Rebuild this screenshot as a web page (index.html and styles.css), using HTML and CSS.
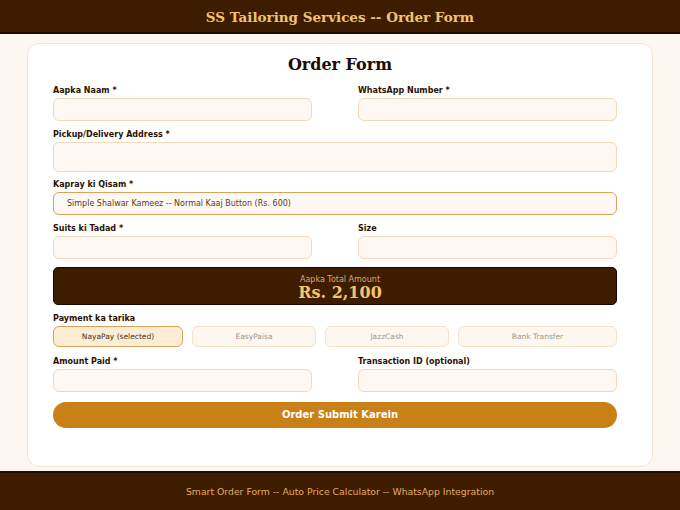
FILE: index.html
```html
<!DOCTYPE html>
<html>
<head>
<meta charset="utf-8">
<link rel="stylesheet" href="styles.css">
</head>
<body>
<header class="top">SS Tailoring Services -- Order Form</header>
<main class="page">
  <section class="card">
    <h2 class="card-title">Order Form</h2>
    <form class="form">
      <div class="row">
        <div class="field">
          <label class="lbl">Aapka Naam *</label>
          <input class="inp" type="text">
        </div>
        <div class="field">
          <label class="lbl">WhatsApp Number *</label>
          <input class="inp" type="text">
        </div>
      </div>
      <div class="field">
        <label class="lbl">Pickup/Delivery Address *</label>
        <div class="inp tall"></div>
      </div>
      <div class="field">
        <label class="lbl">Kapray ki Qisam *</label>
        <div class="inp sel">Simple Shalwar Kameez -- Normal Kaaj Button (Rs. 600)</div>
      </div>
      <div class="row">
        <div class="field">
          <label class="lbl">Suits ki Tadad *</label>
          <input class="inp" type="text">
        </div>
        <div class="field">
          <label class="lbl">Size</label>
          <input class="inp" type="text">
        </div>
      </div>
      <div class="total">
        <div class="total-lbl">Aapka Total Amount</div>
        <div class="total-val">Rs. 2,100</div>
      </div>
      <div class="field pay-field">
        <label class="lbl">Payment ka tarika</label>
        <div class="pay">
          <div class="pbtn on">NayaPay (selected)</div>
          <div class="pbtn">EasyPaisa</div>
          <div class="pbtn">JazzCash</div>
          <div class="pbtn">Bank Transfer</div>
        </div>
      </div>
      <div class="row">
        <div class="field">
          <label class="lbl">Amount Paid *</label>
          <input class="inp" type="text">
        </div>
        <div class="field">
          <label class="lbl">Transaction ID (optional)</label>
          <input class="inp" type="text">
        </div>
      </div>
      <div class="submit">Order Submit Karein</div>
    </form>
  </section>
</main>
<footer class="foot">Smart Order Form -- Auto Price Calculator -- WhatsApp Integration</footer>
</body>
</html>
```
FILE: styles.css
```css
* { box-sizing: border-box; }
html, body { margin: 0; padding: 0; }
body {
  background: #fdf7f2;
  font-family: "DejaVu Sans", sans-serif;
  width: 680px;
  height: 510px;
  overflow: hidden;
}
.top {
  height: 34px;
  background: #3d1c00;
  border-bottom: 2px solid #1e0d00;
  color: #f2c46d;
  font-family: "DejaVu Serif", serif;
  font-weight: bold;
  font-size: 13.5px;
  line-height: 34px;
  text-align: center;
}
.page {
  padding: 9px 27px 4px;
}
.card {
  height: 424px;
  background: #ffffff;
  border: 1px solid #f4e4d3;
  border-radius: 12px;
  padding: 11px 0 0;
}
.card-title {
  margin: 0 0 9px;
  font-family: "DejaVu Serif", serif;
  font-weight: bold;
  font-size: 16px;
  line-height: 20px;
  text-align: center;
  color: #1e0c00;
}
.form {
  padding: 0 35px 0 25px;
}
.row {
  display: grid;
  grid-template-columns: 259px 259px;
  column-gap: 46px;
}
.field {
  margin-bottom: 6.5px;
}
.lbl {
  display: block;
  font-weight: bold;
  font-size: 8px;
  line-height: 13px;
  color: #2b1200;
  margin-bottom: 1px;
}
.inp {
  display: block;
  width: 100%;
  height: 23px;
  margin: 0;
  background: #fdf8f3;
  border: 1px solid #f0dabd;
  border-radius: 6px;
  outline: none;
  font-family: "DejaVu Sans", sans-serif;
}
.tall { height: 30px; }
.sel {
  border-color: #d9a35a;
  font-size: 8px;
  line-height: 21px;
  color: #5a3c22;
  padding-left: 13px;
}
.total {
  margin-top: 2px;
  margin-bottom: 6.5px;
  height: 38px;
  background: #3d1c00;
  border: 1px solid #150800;
  border-radius: 5px;
  text-align: center;
  padding: 7px 0 0 10px;
}
.total-lbl {
  font-size: 8px;
  line-height: 10px;
  color: #d9a870;
}
.total-val {
  font-family: "DejaVu Serif", serif;
  font-weight: bold;
  font-size: 16px;
  line-height: 16px;
  color: #f5c46a;
}
.pay-field { margin-bottom: 8px; }
.pay {
  display: grid;
  grid-template-columns: 130px 124px 124px 159px;
  column-gap: 9px;
}
.pbtn {
  height: 21px;
  border: 1px solid #f3e2cc;
  background: #fdf7f1;
  border-radius: 6px;
  font-size: 7.5px;
  line-height: 19px;
  text-align: center;
  color: #a59585;
}
.pbtn.on {
  background: #fdedd5;
  border-color: #d9a35a;
  color: #4a3020;
}
.submit {
  margin-top: 4px;
  height: 26px;
  background: #c98017;
  border-radius: 13px;
  color: #ffffff;
  font-weight: bold;
  font-size: 10px;
  line-height: 26px;
  text-align: center;
  padding-left: 10px;
}
.foot {
  height: 39px;
  background: #3d1c00;
  border-top: 2px solid #1e0d00;
  color: #e3ac62;
  font-size: 9.3px;
  line-height: 37px;
  text-align: center;
}
```
